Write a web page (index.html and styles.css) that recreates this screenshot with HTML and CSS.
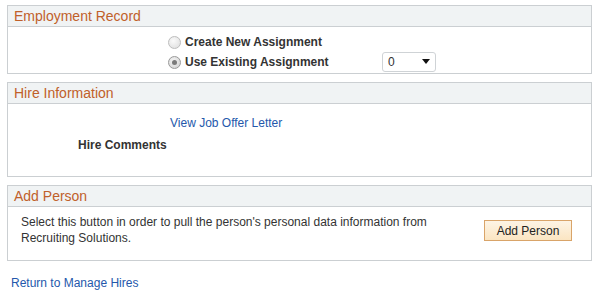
FILE: index.html
```
<!DOCTYPE html>
<html>
<head>
<meta charset="utf-8">
<link rel="stylesheet" href="styles.css">
</head>
<body>
<div class="page">
  <section class="box">
    <div class="box-head">Employment Record</div>
    <div class="box-body emp">
      <div class="radio-row">
        <span class="radio"></span>
        <span class="lbl">Create New Assignment</span>
      </div>
      <div class="radio-row">
        <span class="radio checked"></span>
        <span class="lbl">Use Existing Assignment</span>
        <span class="select"><span class="sel-val">0</span><span class="caret"></span></span>
      </div>
    </div>
  </section>

  <section class="box">
    <div class="box-head">Hire Information</div>
    <div class="box-body hire">
      <a class="link offer" href="#">View Job Offer Letter</a>
      <span class="lbl comments">Hire Comments</span>
    </div>
  </section>

  <section class="box">
    <div class="box-head">Add Person</div>
    <div class="box-body add">
      <p class="desc">Select this button in order to pull the person's personal data information from Recruiting Solutions.</p>
      <span class="btn">Add Person</span>
    </div>
  </section>

  <a class="link return" href="#">Return to Manage Hires</a>
</div>
</body>
</html>
```
FILE: styles.css
```
html, body {
  margin: 0;
  padding: 0;
  background: #fff;
}
body {
  font-family: "Liberation Sans", Arial, sans-serif;
  font-size: 12px;
  color: #333;
}
.page {
  padding: 5px 0 0 7px;
  display: flex;
  flex-direction: column;
  align-items: flex-start;
}
.box {
  width: 583px;
  border: 1px solid #cbcfd2;
  margin-bottom: 8px;
}
.box-head {
  height: 20px;
  line-height: 21px;
  background: #f0f3f4;
  border-bottom: 1px solid #cbcfd2;
  color: #c0602a;
  font-size: 14px;
  padding-left: 6px;
}
.box-body.emp {
  height: 46px;
  box-sizing: border-box;
  padding: 5px 0 0 160px;
}
.radio-row {
  display: flex;
  align-items: center;
  height: 20px;
}
.radio {
  width: 11px;
  height: 11px;
  border-radius: 50%;
  border: 1px solid #bdbdbd;
  background: radial-gradient(circle at 40% 35%, #fafafa, #dcdcdc);
  margin-right: 4px;
  position: relative;
  box-sizing: content-box;
}
.radio.checked {
  border-color: #9a9a9a;
  background: radial-gradient(circle at 40% 35%, #f4f4f4, #cfcfcf);
}
.radio.checked::after {
  content: "";
  position: absolute;
  left: 3px;
  top: 3px;
  width: 5px;
  height: 5px;
  border-radius: 50%;
  background: #7a7a7a;
}
.lbl {
  font-weight: bold;
  color: #333;
}
.radio-row .lbl {
  width: 197px;
}
.select {
  display: flex;
  align-items: center;
  justify-content: space-between;
  width: 54px;
  height: 20px;
  box-sizing: border-box;
  border: 1px solid #cfd3d6;
  border-radius: 3px;
  padding: 0 5px 0 5px;
  background: #fff;
  margin-top: -1px;
}
.sel-val {
  color: #333;
}
.caret {
  width: 0;
  height: 0;
  border-left: 4px solid transparent;
  border-right: 4px solid transparent;
  border-top: 5px solid #111;
}
.box-body.hire {
  height: 72px;
  box-sizing: border-box;
  padding-top: 9px;
  display: flex;
  flex-direction: column;
  align-items: flex-start;
}
.link {
  color: #2458ab;
  text-decoration: none;
}
.offer {
  line-height: 20px;
  margin-left: 162px;
}
.comments {
  line-height: 20px;
  margin-top: 2px;
  margin-left: 70px;
}
.box-body.add {
  height: 53px;
  box-sizing: border-box;
  padding: 7px 19px 0 13px;
  display: flex;
  justify-content: space-between;
  align-items: flex-start;
}
.desc {
  margin: 0;
  width: 440px;
  line-height: 16px;
}
.btn {
  margin-top: 6px;
  width: 88px;
  height: 21px;
  box-sizing: border-box;
  border: 1px solid #d9a469;
  background: linear-gradient(#fdf4e5, #fbe5c2);
  display: flex;
  align-items: center;
  justify-content: center;
  color: #222;
  font-size: 12px;
}
.return {
  margin-top: 6px;
  margin-left: 4px;
  line-height: 16px;
}
```
